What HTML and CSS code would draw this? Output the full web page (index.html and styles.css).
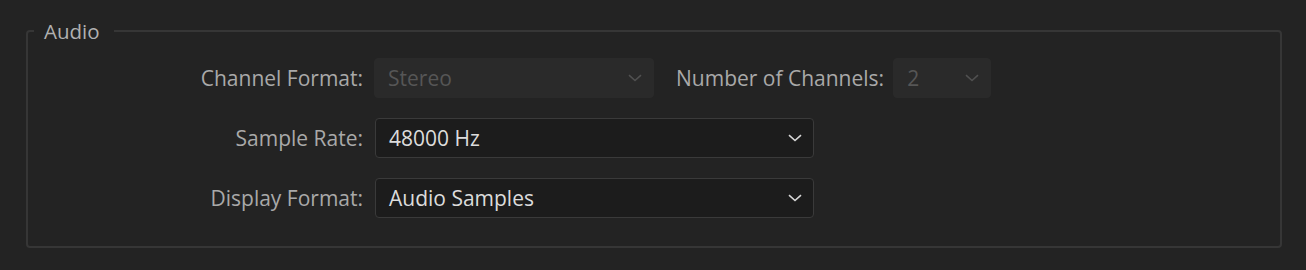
FILE: index.html
```html
<!DOCTYPE html>
<html lang="en">

<head>
    <meta charset="UTF-8">
    <meta name="viewport" content="width=device-width, initial-scale=1.0">
    <title>Audio settings</title>
    <link rel="stylesheet" href="styles.css">
</head>

<body>
    <fieldset class="group">
        <legend class="group-title">Audio</legend>
        <div class="form-grid">
            <label class="field-label">Channel Format:</label>
            <div class="field-row">
                <div class="dropdown dropdown-disabled dropdown-channel">
                    <span class="dropdown-value">Stereo</span>
                    <svg class="chevron" width="14" height="8" viewBox="0 0 14 8"><path d="M1 1.2 L7 6.5 L13 1.2" /></svg>
                </div>
                <label class="field-label inline-label">Number of Channels:</label>
                <div class="dropdown dropdown-disabled dropdown-count">
                    <span class="dropdown-value">2</span>
                    <svg class="chevron" width="14" height="8" viewBox="0 0 14 8"><path d="M1 1.2 L7 6.5 L13 1.2" /></svg>
                </div>
            </div>

            <label class="field-label">Sample Rate:</label>
            <div class="field-row">
                <div class="dropdown dropdown-wide">
                    <span class="dropdown-value">48000 Hz</span>
                    <svg class="chevron" width="14" height="8" viewBox="0 0 14 8"><path d="M1 1.2 L7 6.5 L13 1.2" /></svg>
                </div>
            </div>

            <label class="field-label">Display Format:</label>
            <div class="field-row">
                <div class="dropdown dropdown-wide">
                    <span class="dropdown-value">Audio Samples</span>
                    <svg class="chevron" width="14" height="8" viewBox="0 0 14 8"><path d="M1 1.2 L7 6.5 L13 1.2" /></svg>
                </div>
            </div>
        </div>
    </fieldset>
</body>

</html>
```

FILE: styles.css
```css
body {
    margin: 0;
    padding: 17px 0 0 26px;
    background: #232323;
    font-family: "Open Sans", "Noto Sans", sans-serif;
    font-size: 21px;
    color: #a9a9a9;
}

.group {
    width: 1256px;
    margin: 0;
    padding: 13px 0 28px 0;
    border: 2px solid #363636;
    border-radius: 4px;
    box-sizing: border-box;
}

.group-title {
    margin-left: 6px;
    padding: 0 14px 0 10px;
    line-height: 28px;
    font-size: 20.5px;
    color: #b1b1b1;
}

.form-grid {
    display: grid;
    grid-template-columns: 335px auto;
    column-gap: 12px;
    row-gap: 20px;
    align-items: center;
}

.field-label {
    text-align: right;
    white-space: nowrap;
}

.field-row {
    display: flex;
    align-items: center;
}

.inline-label {
    margin-left: 22px;
    margin-right: 9px;
}

.dropdown {
    display: flex;
    align-items: center;
    justify-content: space-between;
    height: 40px;
    padding: 0 11px 0 13px;
    border: 1px solid #3a3a3a;
    border-radius: 4px;
    background: #1c1c1c;
    color: #dcdcdc;
    box-sizing: border-box;
}

.dropdown .chevron path {
    fill: none;
    stroke: #d6d6d6;
    stroke-width: 1.6;
}

.dropdown-disabled {
    border-color: #2a2a2a;
    background: #2a2a2a;
    color: #565656;
}

.dropdown-disabled .chevron path {
    stroke: #505050;
}

.dropdown-channel {
    width: 280px;
    margin-left: -1px;
}

.dropdown-count {
    width: 98px;
}

.dropdown-wide {
    width: 439px;
}
```
